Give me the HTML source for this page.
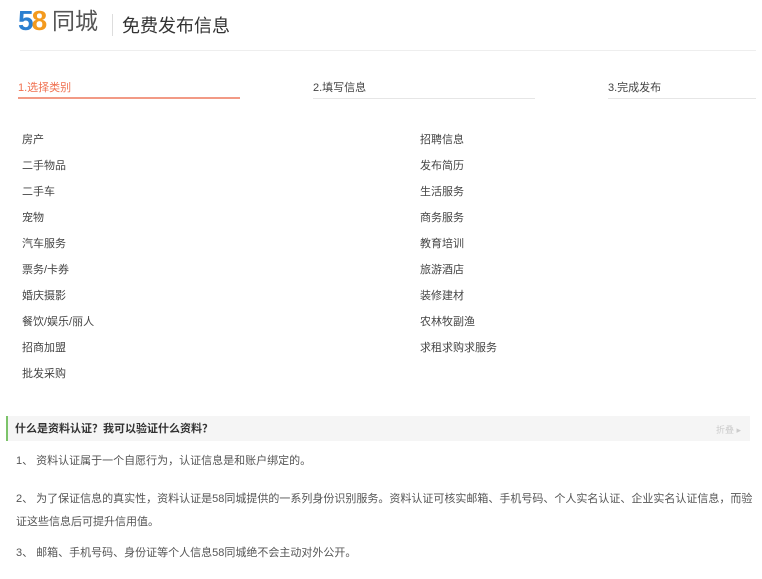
<!DOCTYPE html>
<html><head><meta charset="utf-8"><style>
body{margin:0;width:762px;height:579px;background:#fff;font-family:"Liberation Sans","Noto Sans CJK SC",sans-serif;color:#444;position:relative;overflow:hidden}
.a{position:absolute;white-space:nowrap}
.s{font-size:11px;line-height:14px}
</style></head><body>
<div class="a" style="left:18px;top:4px;font-size:28px;font-weight:bold;line-height:34px;letter-spacing:-2px"><span style="color:#2b7fd0">5</span><span style="color:#f39a1e">8</span></div>
<div class="a" style="left:52px;top:6px;font-size:23px;line-height:30px;color:#555">同城</div>
<div class="a" style="left:112px;top:14px;width:1px;height:22px;background:#ddd"></div>
<div class="a" style="left:122px;top:13px;font-size:18px;line-height:26px;color:#333">免费发布信息</div>
<div class="a" style="left:20px;top:50px;width:736px;height:1px;background:#eee"></div>

<div class="a s" style="left:18px;top:81px;color:#f07050">1.选择类别</div>
<div class="a" style="left:18px;top:97px;width:222px;height:2px;background:#f29a85"></div>
<div class="a s" style="left:313px;top:81px">2.填写信息</div>
<div class="a" style="left:313px;top:98px;width:222px;height:1px;background:#e6e6e6"></div>
<div class="a s" style="left:608px;top:81px">3.完成发布</div>
<div class="a" style="left:608px;top:98px;width:148px;height:1px;background:#e6e6e6"></div>

<div class="a s" style="left:22px;top:127px;line-height:26px">房产<br>二手物品<br>二手车<br>宠物<br>汽车服务<br>票务/卡券<br>婚庆摄影<br>餐饮/娱乐/丽人<br>招商加盟<br>批发采购</div>
<div class="a s" style="left:420px;top:127px;line-height:26px">招聘信息<br>发布简历<br>生活服务<br>商务服务<br>教育培训<br>旅游酒店<br>装修建材<br>农林牧副渔<br>求租求购求服务</div>

<div class="a" style="left:6px;top:416px;width:742px;height:25px;background:#f5f5f5;border-left:2px solid #7cc36a"></div>
<div class="a s" style="left:15px;top:422px;font-weight:bold;color:#333">什么是资料认证？我可以验证什么资料？</div>
<div class="a" style="left:716px;top:423px;font-size:9px;color:#ccc">折叠 ▸</div>

<div class="a s" style="left:16px;top:454px;color:#555">1、 资料认证属于一个自愿行为，认证信息是和账户绑定的。</div>
<div class="a s" style="left:16px;top:488px;color:#555;line-height:23px">2、 为了保证信息的真实性，资料认证是58同城提供的一系列身份识别服务。资料认证可核实邮箱、手机号码、个人实名认证、企业实名认证信息，而验<br>证这些信息后可提升信用值。</div>
<div class="a s" style="left:16px;top:546px;color:#555">3、 邮箱、手机号码、身份证等个人信息58同城绝不会主动对外公开。</div>
</body></html>
